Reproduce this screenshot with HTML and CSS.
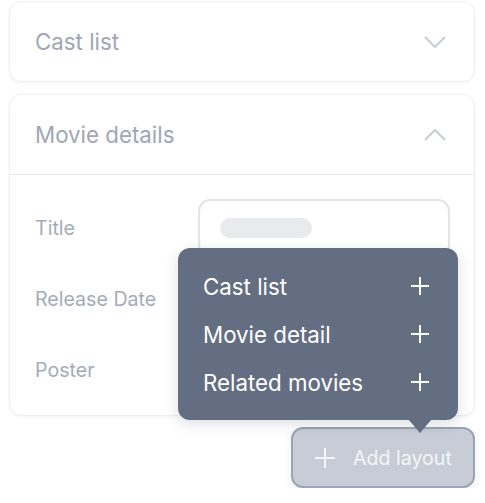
FILE: index.html
```html
<!DOCTYPE html>
<html>
<head>
<meta charset="utf-8">
<title>Layouts</title>
<link rel="stylesheet" href="styles.css">
</head>
<body>
<div class="page">
	<div class="panel">
		<div class="panel-head">
			<span>Cast list</span>
			<svg class="chevron" width="22" height="12" viewBox="0 0 22 12"><path d="M1 1 L11 11 L21 1" /></svg>
		</div>
	</div>

	<div class="panel">
		<div class="panel-head open">
			<span>Movie details</span>
			<svg class="chevron" width="22" height="12" viewBox="0 0 22 12"><path d="M1 11 L11 1 L21 11" /></svg>
		</div>
		<div class="panel-body">
			<div class="field">
				<label>Title</label>
				<div class="box"><span class="skeleton"></span></div>
			</div>
			<div class="field">
				<label>Release Date</label>
				<div class="box"></div>
			</div>
			<div class="field">
				<label>Poster</label>
				<div class="box"></div>
			</div>
		</div>
	</div>

	<div class="footer">
		<div class="menu">
			<div class="menu-item">
				<span>Cast list</span>
				<svg class="plus" width="20" height="20" viewBox="0 0 20 20"><path d="M10 1 V19 M1 10 H19" /></svg>
			</div>
			<div class="menu-item">
				<span>Movie detail</span>
				<svg class="plus" width="20" height="20" viewBox="0 0 20 20"><path d="M10 1 V19 M1 10 H19" /></svg>
			</div>
			<div class="menu-item">
				<span>Related movies</span>
				<svg class="plus" width="20" height="20" viewBox="0 0 20 20"><path d="M10 1 V19 M1 10 H19" /></svg>
			</div>
			<span class="menu-tip"></span>
		</div>
		<button class="add-btn">
			<svg class="plus" width="22" height="22" viewBox="0 0 22 22"><path d="M11 1 V21 M1 11 H21" /></svg>
			<span>Add layout</span>
		</button>
	</div>
</div>
</body>
</html>
```

FILE: styles.css
```css
* {
	box-sizing: border-box;
}
body {
	margin: 0;
	background-color: #fff;
	font-family: Inter, "Noto Sans", Arial, sans-serif;
}
.page {
	padding: 1px 10px 0 9px;
	display: flex;
	flex-direction: column;
	gap: 12px;
}
.panel {
	border: 1px solid #eeeff2;
	border-radius: 12px;
	background-color: #fff;
	box-shadow: 0 1px 3px rgba(30, 40, 60, 0.05);
}
.panel-head {
	height: 79px;
	display: flex;
	align-items: center;
	justify-content: space-between;
	padding: 0 28px 0 25px;
	font-size: 22.3px;
	color: #a0a6b5;
}
.panel-head.open {
	height: 80px;
	border-bottom: 1px solid #e9eaee;
}
.chevron path {
	fill: none;
	stroke: #c8ccd5;
	stroke-width: 2;
}
.panel-body {
	padding: 24px 24px 16px 25px;
	display: flex;
	flex-direction: column;
	gap: 13px;
}
.field {
	display: grid;
	grid-template-columns: 163px 1fr;
	align-items: center;
}
.field label {
	font-size: 19.6px;
	color: #a5abb9;
}
.box {
	height: 58px;
	border: 2px solid #e1e4e9;
	border-radius: 12px;
	display: flex;
	align-items: center;
	padding-left: 20px;
}
.skeleton {
	width: 92px;
	height: 20px;
	border-radius: 10px;
	background-color: #e9eaee;
}
.footer {
	position: relative;
	display: flex;
	justify-content: flex-end;
	margin-top: -1px;
}
.add-btn {
	width: 184px;
	height: 61px;
	display: flex;
	align-items: center;
	gap: 17px;
	padding: 0 0 0 21px;
	background-color: #c7ccd6;
	border: 2px solid #9ba4b5;
	border-radius: 12px;
	color: #f4f5f7;
	font-family: Inter, "Noto Sans", Arial, sans-serif;
	font-size: 19.6px;
	box-shadow: 0 4px 10px rgba(30, 40, 60, 0.08);
}
.add-btn .plus path {
	stroke: #f4f5f7;
	stroke-width: 2;
}
.menu {
	position: absolute;
	right: 17px;
	bottom: calc(100% + 7px);
	width: 280px;
	padding: 14px 28px 14px 25px;
	background-color: #646e83;
	border-radius: 12px;
	color: #fff;
	font-size: 22.3px;
	z-index: 2;
	box-shadow: 0 4px 14px rgba(30, 40, 60, 0.15);
}
.menu-item {
	height: 48px;
	display: flex;
	align-items: center;
	justify-content: space-between;
}
.menu .plus path {
	stroke: #fff;
	stroke-width: 2;
}
.menu-tip {
	position: absolute;
	right: 26px;
	bottom: -13px;
	width: 0;
	height: 0;
	border-left: 12px solid transparent;
	border-right: 12px solid transparent;
	border-top: 14px solid #646e83;
}
```
